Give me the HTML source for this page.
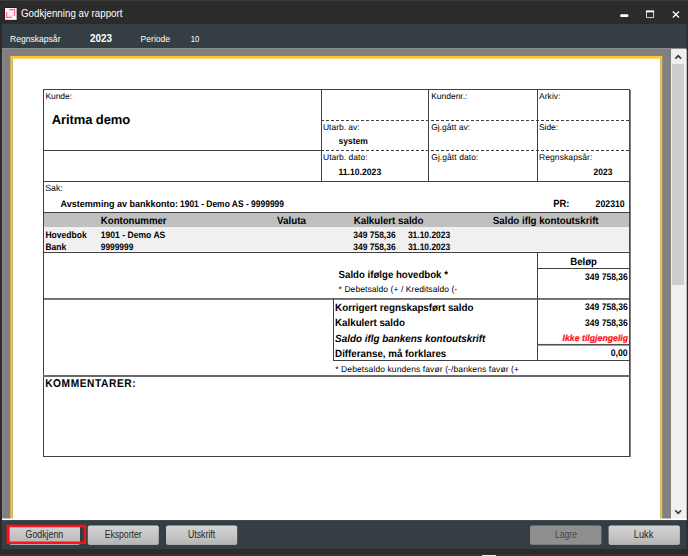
<!DOCTYPE html>
<html>
<head>
<meta charset="utf-8">
<title>Godkjenning av rapport</title>
<style>
html,body{margin:0;padding:0;}
body{width:688px;height:556px;overflow:hidden;background:#2b2b2b;position:relative;font-family:"Liberation Sans",sans-serif;}
.abs{position:absolute;}
#titlebar{left:0;top:0;width:688px;height:24px;background:#2b2b2b;}
#topline{left:0;top:0;width:688px;height:1px;background:#3a3a3a;}
#toolbar{left:2px;top:24px;width:684px;height:24px;background:#353f43;}
#viewer{left:2px;top:48px;width:669px;height:471px;background:#808080;}
#viewhl-t{left:2px;top:48px;width:684px;height:1px;background:#8c8c8c;}
#viewhl-l{left:2px;top:48px;width:1px;height:471px;background:#8c8c8c;}
#sb{left:671px;top:49px;width:15px;height:470px;background:#f0f0f0;}
#thumb{left:672px;top:64px;width:12px;height:221px;background:#cdcdcd;}
#bottombar{left:2px;top:520px;width:684px;height:29px;background:#353f43;}
svg{position:absolute;left:0;top:0;}
</style>
</head>
<body>
<div class="abs" id="titlebar"></div>
<div class="abs" id="topline"></div>
<div class="abs" id="toolbar"></div>
<div class="abs" id="viewer"></div>
<div class="abs" id="viewhl-t"></div>
<div class="abs" id="viewhl-l"></div>
<div class="abs" id="sb"></div>
<div class="abs" id="thumb"></div>
<div class="abs" id="bottombar"></div>

<svg width="688" height="556" viewBox="0 0 688 556" font-family="Liberation Sans, sans-serif">
<!-- CHROME -->
<g id="chrome">
  <!-- page with yellow frame -->
  <rect x="10.4" y="56" width="651.8" height="463" fill="#ffc629"/>
  <rect x="660.2" y="58.6" width="0.8" height="460" fill="#b8963a"/>
  <rect x="12.5" y="58.6" width="647.7" height="460.4" fill="#ffffff"/>
  <rect x="12" y="58.6" width="0.55" height="460" fill="#a38a3a"/>
  <rect x="2" y="518.5" width="684.6" height="1.5" fill="#ffffff"/>
  <!-- app icon -->
  <rect x="4.3" y="7.3" width="13" height="13.1" fill="#2a1030"/>
  <rect x="5" y="8" width="11.7" height="11.9" fill="#fff1f5"/>
  <rect x="8.5" y="11.5" width="4.7" height="4.5" fill="#fddde4"/>
  <rect x="9.5" y="12.5" width="2.7" height="2.5" fill="#fff6f8"/>
  <path d="M9 9.65 H14.5 V15.7" fill="none" stroke="#ff6889" stroke-width="1.3"/>
  <path d="M6.6 12 V17.4 H12" fill="none" stroke="#ff6889" stroke-width="1.3"/>
  <text x="21" y="17.2" font-size="10.5" fill="#ffffff" textLength="101.5" lengthAdjust="spacingAndGlyphs">Godkjenning av rapport</text>
  <!-- window controls -->
  <rect x="620.2" y="14.3" width="8.2" height="2.8" rx="1" fill="#ffffff"/>
  <path d="M646.5 11.5 H653.6 V17.6 H646.5 Z" fill="none" stroke="#d4d4d4" stroke-width="1"/>
  <rect x="646" y="10.4" width="8.1" height="1.9" fill="#ffffff"/>
  <path d="M672.8 11.5 L679 17.5 M679 11.5 L672.8 17.5" stroke="#ffffff" stroke-width="1.3" fill="none"/>
  <!-- toolbar text -->
  <text x="10" y="41.7" font-size="9.5" fill="#ffffff" textLength="50.5" lengthAdjust="spacingAndGlyphs">Regnskapsår</text>
  <text x="90" y="41.7" font-size="10.5" font-weight="bold" fill="#ffffff" textLength="22" lengthAdjust="spacingAndGlyphs">2023</text>
  <text x="140.6" y="41.7" font-size="9.5" fill="#ffffff" textLength="29.5" lengthAdjust="spacingAndGlyphs">Periode</text>
  <text x="190.7" y="41.7" font-size="9.5" fill="#ffffff" textLength="8.6" lengthAdjust="spacingAndGlyphs">10</text>
  <!-- scrollbar arrows -->
  <path d="M675.3 58.7 L678.2 55.8 L681.1 58.7" fill="none" stroke="#404040" stroke-width="1.7"/>
  <path d="M675.3 510.4 L678.2 513.3 L681.1 510.4" fill="none" stroke="#404040" stroke-width="1.7"/>
  <!-- buttons -->
  <defs>
    <linearGradient id="bg" x1="0" y1="0" x2="0" y2="1">
      <stop offset="0" stop-color="#d8d8d8"/><stop offset="0.08" stop-color="#d1d1d1"/><stop offset="0.5" stop-color="#c6c6c6"/><stop offset="0.95" stop-color="#b6b6b6"/><stop offset="1" stop-color="#a8a8a8"/>
    </linearGradient>
  </defs>
  <g id="buttons" font-size="10" fill="#262626">
    <rect x="9.2" y="525.6" width="70.8" height="19.3" rx="2" fill="url(#bg)"/>
    <rect x="87.8" y="525.6" width="71" height="19.3" rx="2" fill="url(#bg)"/>
    <rect x="166" y="525.6" width="71.2" height="19.3" rx="2" fill="url(#bg)"/>
    <rect x="530" y="525.4" width="71.4" height="19.4" rx="2" fill="#8f8f8f"/>
    <rect x="608.6" y="525.6" width="71.3" height="19.3" rx="2" fill="url(#bg)"/>
    <path d="M6.5 524.8 H86.1 V544.1 H6.5 Z M9.5 527.3 V541.6 H83.8 V527.3 Z" fill="#ff0f1a" fill-rule="evenodd"/>
    <text x="25.6" y="537.8" textLength="37.6" lengthAdjust="spacingAndGlyphs">Godkjenn</text>
    <text x="104.7" y="537.9" textLength="36.9" lengthAdjust="spacingAndGlyphs">Eksporter</text>
    <text x="188" y="537.9" textLength="27.2" lengthAdjust="spacingAndGlyphs">Utskrift</text>
    <text x="555" y="537.9" textLength="21.9" lengthAdjust="spacingAndGlyphs" fill="#484848">Lagre</text>
    <text x="633.8" y="537.9" textLength="19.5" lengthAdjust="spacingAndGlyphs">Lukk</text>
  </g>
  <rect x="2" y="520" width="684.6" height="1" fill="#424c50"/>
  <!-- right edge fractional strips -->
  <rect x="686" y="24" width="0.6" height="24" fill="#353f43"/>
  <rect x="686" y="48" width="0.6" height="1.6" fill="#808080"/>
  <rect x="686" y="49.6" width="0.7" height="470.4" fill="#f6f6f6"/>
  <rect x="686" y="520" width="0.6" height="29" fill="#353f43"/>
  <rect x="44" y="555" width="39" height="1" fill="#5a5a5a"/>
  <!-- bottom artefacts -->
  <rect x="0" y="554" width="688" height="2" fill="#323232"/>
  <rect x="482" y="555" width="14" height="1" fill="#e8e8e8"/>
</g>

<!-- DOCUMENT -->
<g id="doc" fill="#000000">
  <!-- bands -->
  <rect x="44" y="213" width="585" height="14" fill="#c0c0c0"/>
  <rect x="44" y="227" width="585" height="24.4" fill="#f0f0f0"/>
  <g id="lines" stroke="#404040" stroke-width="1" fill="none" shape-rendering="crispEdges">
    <!-- outer -->
    <path d="M43.5 89 V457 M43 89.5 H630 M43 456.5 H631"/>
    <path d="M629.5 89 V457" stroke="#484848"/>
    <path d="M630.5 90 V457" stroke="#808080"/>
    <!-- header block -->
    <path d="M321.5 89 V181 M428.5 89 V181 M537.5 89 V181"/>
    <path d="M43 150.5 H321 M43 181.5 H630"/>
    <path d="M321 120.5 H629 M321 150.5 H629" stroke-dasharray="3 2"/>
    <!-- bands -->
    <path d="M43 212.5 H630"/>
    <path d="M43 252.5 H630"/>
    <!-- belop -->
    <path d="M537.5 252 V361 M537 268.5 H630 M333.5 298 V361 M333 360.5 H630"/>
  </g>
  <rect x="43" y="298.2" width="587" height="1.5" fill="#484848"/>
  <rect x="43" y="375" width="587" height="2" fill="#6c6c6c"/>
  <rect x="537" y="343.95" width="93" height="1.6" fill="#505050"/>

  <g id="txt" font-size="8.5" text-rendering="geometricPrecision">
    <!-- header labels -->
    <text x="45.4" y="98.5" textLength="26.6">Kunde:</text>
    <text x="51.7" y="124.4" font-size="13" font-weight="bold" textLength="78.5">Aritma demo</text>
    <text x="431.2" y="98.5" textLength="36.2">Kundenr.:</text>
    <text x="539" y="98.5" textLength="21.5">Arkiv:</text>
    <text x="323" y="130" textLength="36.6">Utarb. av:</text>
    <text x="431.2" y="130" textLength="38.8">Gj.gått av:</text>
    <text x="539" y="130" textLength="19.1">Side:</text>
    <text x="338.5" y="144.2" font-size="9" font-weight="bold" textLength="29.4" lengthAdjust="spacingAndGlyphs">system</text>
    <text x="323" y="160" textLength="44.6">Utarb. dato:</text>
    <text x="431.2" y="159.8" textLength="47.1">Gj.gått dato:</text>
    <text x="539" y="159.8" textLength="53.4">Regnskapsår:</text>
    <text x="338.5" y="175.3" font-size="9.2" font-weight="bold" textLength="42.7" lengthAdjust="spacingAndGlyphs">11.10.2023</text>
    <text x="593.6" y="175.3" font-size="9.2" font-weight="bold" textLength="18.9" lengthAdjust="spacingAndGlyphs">2023</text>
    <!-- sak -->
    <text x="45.2" y="191" font-size="9" textLength="17.5" lengthAdjust="spacingAndGlyphs">Sak:</text>
    <text x="60.6" y="207" font-size="9.5" font-weight="bold" textLength="117.5" lengthAdjust="spacingAndGlyphs">Avstemming av bankkonto:</text>
    <text x="180" y="207" font-size="9.5" font-weight="bold" textLength="104" lengthAdjust="spacingAndGlyphs">1901 - Demo AS - 9999999</text>
    <text x="553.3" y="207.2" font-size="10.4" font-weight="bold" textLength="16.2" lengthAdjust="spacingAndGlyphs">PR:</text>
    <text x="595.6" y="207.2" font-size="9.6" font-weight="bold" textLength="29.1" lengthAdjust="spacingAndGlyphs">202310</text>
    <!-- band header -->
    <g font-size="10.4" font-weight="bold" class="h">
      <text x="100.8" y="224" textLength="65.8" lengthAdjust="spacingAndGlyphs">Kontonummer</text>
      <text x="277" y="224" textLength="29" lengthAdjust="spacingAndGlyphs">Valuta</text>
      <text x="353.7" y="224" textLength="69.8" lengthAdjust="spacingAndGlyphs">Kalkulert saldo</text>
      <text x="492.8" y="224" textLength="105.8" lengthAdjust="spacingAndGlyphs">Saldo iflg kontoutskrift</text>
    </g>
    <g font-weight="bold" font-size="9.3" lengthAdjust="spacingAndGlyphs">
      <text x="45.4" y="238" textLength="41.3" lengthAdjust="spacingAndGlyphs">Hovedbok</text>
      <text x="100.8" y="238" textLength="64.5" lengthAdjust="spacingAndGlyphs">1901 - Demo AS</text>
      <text x="353.3" y="238" textLength="42.3" lengthAdjust="spacingAndGlyphs">349 758,36</text>
      <text x="407.9" y="238" textLength="42.3" lengthAdjust="spacingAndGlyphs">31.10.2023</text>
      <text x="45.4" y="250" textLength="21" lengthAdjust="spacingAndGlyphs">Bank</text>
      <text x="100.8" y="250" textLength="32.5" lengthAdjust="spacingAndGlyphs">9999999</text>
      <text x="353.3" y="250" textLength="42.3" lengthAdjust="spacingAndGlyphs">349 758,36</text>
      <text x="407.9" y="250" textLength="42.3" lengthAdjust="spacingAndGlyphs">31.10.2023</text>
    </g>
    <!-- belop -->
    <text x="570.2" y="264.5" font-size="10.4" font-weight="bold" textLength="26.8" lengthAdjust="spacingAndGlyphs">Beløp</text>
    <text x="338.6" y="277.8" font-size="10.4" font-weight="bold" textLength="109.3" lengthAdjust="spacingAndGlyphs">Saldo ifølge hovedbok *</text>
    <text x="338.6" y="292.2" textLength="118.6">* Debetsaldo (+ / Kreditsaldo (-</text>
    <text x="585.1" y="279.7" font-size="9.6" font-weight="bold" textLength="42.6" lengthAdjust="spacingAndGlyphs">349 758,36</text>
    <g font-size="10.4" font-weight="bold" class="h">
      <text x="335.1" y="310.9" textLength="138.4" lengthAdjust="spacingAndGlyphs">Korrigert regnskapsført saldo</text>
      <text x="335.1" y="326.2" textLength="69.8" lengthAdjust="spacingAndGlyphs">Kalkulert saldo</text>
      <text x="335.1" y="341.5" font-style="italic" textLength="150.3" lengthAdjust="spacingAndGlyphs">Saldo iflg bankens kontoutskrift</text>
      <text x="335.1" y="356.6" textLength="111.2" lengthAdjust="spacingAndGlyphs">Differanse, må forklares</text>
    </g>
    <g font-weight="bold" text-anchor="end">
      <text x="585.1" y="310.4" font-size="9.6" text-anchor="start" textLength="42.6" lengthAdjust="spacingAndGlyphs">349 758,36</text>
      <text x="585.1" y="326.2" font-size="9.6" text-anchor="start" textLength="42.6" lengthAdjust="spacingAndGlyphs">349 758,36</text>
      <text x="628.1" y="340.9" font-size="9" font-style="italic" fill="#ff0a12" stroke="#ff0a12" stroke-width="0.2" textLength="65.5" lengthAdjust="spacingAndGlyphs">Ikke tilgjengelig</text>
      <text x="610.8" y="356" font-size="9.6" text-anchor="start" textLength="16.9" lengthAdjust="spacingAndGlyphs">0,00</text>
    </g>
    <text x="335.2" y="371.5" textLength="183.8">* Debetsaldo kundens favør (-/bankens favør (+</text>
    <text transform="translate(45.2,387.4) scale(0.9,1)" font-size="11.3" font-weight="bold" textLength="100.4" lengthAdjust="spacing">KOMMENTARER:</text>
  </g>
</g>
</svg>
</body>
</html>
